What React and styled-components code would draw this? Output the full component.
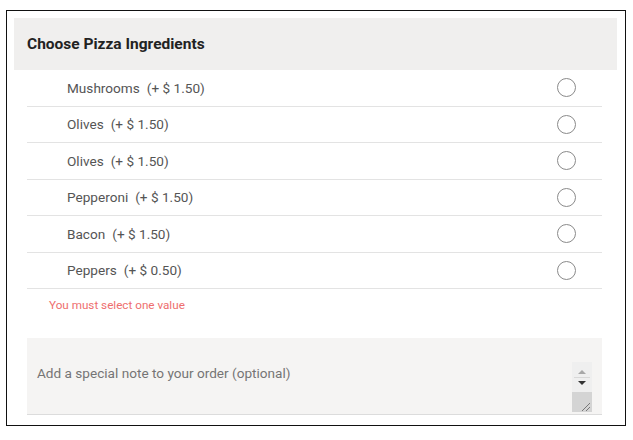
import React from 'react'
import styled, { createGlobalStyle } from 'styled-components';

const GlobalStyle = createGlobalStyle`
  body {
    margin: 0;
    background: #ffffff;
    font-family: Roboto, "Liberation Sans", sans-serif;
  }
`;

const Panel = styled.div`
  box-sizing: border-box;
  width: 620px;
  height: 416px;
  margin: 10px 0 0 6px;
  padding: 7px 8px 0 7px;
  border: 1px solid #111;
`;

const Header = styled.div`
  height: 52px;
  background-color: #f0efee;
  display: flex;
  align-items: center;
  padding-left: 13px;
  font-size: 15.5px;
  font-weight: 700;
  color: #222;
`;

const Body = styled.div`
  margin: 0 15px 0 13px;
`;

const Row = styled.label`
  box-sizing: border-box;
  height: 36.5px;
  display: flex;
  align-items: center;
  justify-content: space-between;
  padding: 0 26px 0 40px;
  border-bottom: 1px solid #e3e3e3;
  font-size: 13.6px;
  color: #555;
  cursor: pointer;

  .price {
    margin-left: 7px;
  }
`;

const Radio = styled.span`
  box-sizing: border-box;
  width: 19px;
  height: 19px;
  border-radius: 50%;
  border: 1.5px solid #8a8a8a;
`;

const ErrorText = styled.div`
  box-sizing: border-box;
  padding: 9px 0 0 22px;
  height: 39px;
  font-size: 11.7px;
  color: #ee6e6e;
`;

const NoteWrapper = styled.div`
  position: relative;
  margin-top: 10px;
`;

const Note = styled.textarea`
  display: block;
  box-sizing: border-box;
  width: 100%;
  height: 77px;
  resize: none;
  border: none;
  border-bottom: 1px solid #dcdcdc;
  background-color: #f5f4f3;
  padding: 27px 10px 0;
  font-family: Roboto, "Liberation Sans", sans-serif;
  font-size: 13.6px;
  color: #555;
  outline: none;
  overflow: hidden;

  ::placeholder {
    color: #aaa;
  }
`;

const Scroll = styled.div`
  position: absolute;
  right: 10px;
  top: 24px;
  width: 20px;
  display: flex;
  flex-direction: column;
`;

const Arrows = styled.div`
  height: 30px;
  background-color: #efefef;
`;

const Grip = styled.div`
  height: 20px;
  background-color: #d4d4d4;
`;

const ingredients = [
  { name: 'Mushrooms', price: '1.50' },
  { name: 'Olives', price: '1.50' },
  { name: 'Olives', price: '1.50' },
  { name: 'Pepperoni', price: '1.50' },
  { name: 'Bacon', price: '1.50' },
  { name: 'Peppers', price: '0.50' },
];

const App = () => {
  return (
    <>
      <GlobalStyle />
      <Panel>
        <Header>Choose Pizza Ingredients</Header>
        <Body>
          {ingredients.map((item, index) => (
            <Row key={index}>
              <span>
                {item.name}
                <span className="price">(+ $ {item.price})</span>
              </span>
              <Radio />
            </Row>
          ))}
          <ErrorText>You must select one value</ErrorText>
          <NoteWrapper>
            <Note placeholder="Add a special note to your order (optional)" />
            <Scroll>
              <Arrows>
                <svg width="20" height="30" viewBox="0 0 20 30">
                  <path d="M6 12 L10 8 L14 12 Z" fill="#a8a8a8" />
                  <line x1="2" y1="15.5" x2="18" y2="15.5" stroke="#d8d8d8" />
                  <path d="M6 19 L14 19 L10 23 Z" fill="#333" />
                </svg>
              </Arrows>
              <Grip>
                <svg width="20" height="20" viewBox="0 0 20 20">
                  <line x1="10" y1="19" x2="18" y2="11" stroke="#777" strokeWidth="1" />
                  <line x1="14" y1="19" x2="18" y2="15" stroke="#777" strokeWidth="1" />
                </svg>
              </Grip>
            </Scroll>
          </NoteWrapper>
        </Body>
      </Panel>
    </>
  );
};

export default App;
